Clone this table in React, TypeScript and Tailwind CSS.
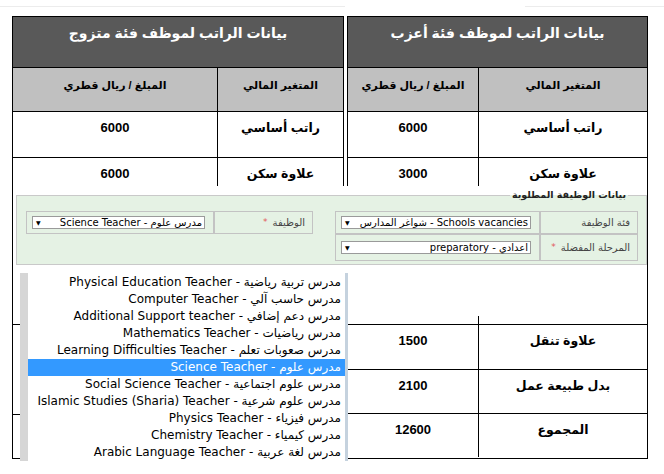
const singleRows = [
  { label: 'راتب أساسي', amount: '6000', h: 'h-[46px]' },
  { label: 'علاوة سكن', amount: '3000', h: 'h-[167px]' },
  { label: 'علاوة تنقل', amount: '1500', h: 'h-[45px]' },
  { label: 'بدل طبيعة عمل', amount: '2100', h: 'h-[44px]' },
  { label: 'المجموع', amount: '12600', h: 'h-[44px]' },
];

const marriedRows = [
  { label: 'راتب أساسي', amount: '6000', h: 'h-[46px]' },
  { label: 'علاوة سكن', amount: '6000', h: 'h-[167px]' },
  { label: '', amount: '', h: 'h-[90px]' },
  { label: '', amount: '', h: 'h-[44px]' },
];

const jobs = [
  'مدرس تربية رياضية - Physical Education Teacher',
  'مدرس حاسب آلي - Computer Teacher',
  'مدرس دعم إضافي - Additional Support teacher',
  'مدرس رياضيات - Mathematics Teacher',
  'مدرس صعوبات تعلم - Learning Difficulties Teacher',
  'مدرس علوم - Science Teacher',
  'مدرس علوم اجتماعية - Social Science Teacher',
  'مدرس علوم شرعية - Islamic Studies (Sharia) Teacher',
  'مدرس فيزياء - Physics Teacher',
  'مدرس كيمياء - Chemistry Teacher',
  'مدرس لغة عربية - Arabic Language Teacher',
];

type Row = { label: string; amount: string; h: string };

function SalaryTable({ title, rows, width, labelWidth }: { title: string; rows: Row[]; width: string; labelWidth: string }) {
  return (
    <div className={`${width} border border-black flex flex-col`}>
      <div className="h-[50px] bg-[#595959] text-white text-center font-bold text-[14px] leading-[20px] pt-[6px]">
        {title}
      </div>
      <div className="h-[44px] flex border-t border-black bg-[#c0c0c0] font-bold text-[11px] leading-[16px]">
        <div className={`${labelWidth} border-l border-black text-center pt-[9px]`}>المتغير المالي</div>
        <div className="flex-1 text-center pt-[9px]">المبلغ / ريال قطري</div>
      </div>
      {rows.map((r, i) => (
        <div key={i} className={`${r.h} flex border-t border-black font-bold leading-[16px]`}>
          <div className={`${labelWidth} border-l border-black text-center pt-[8px] text-[12.5px]`}>{r.label}</div>
          <div className="flex-1 text-center pt-[8px] text-[13px]">{r.amount}</div>
        </div>
      ))}
    </div>
  );
}

function FakeSelect({ value, width }: { value: string; width: string }) {
  return (
    <div className={`${width} h-[13px] bg-white border border-[#9a9a9a] flex items-center justify-between text-[10px] leading-[11px] text-black`}>
      <span className="pr-[2px] whitespace-nowrap">{value}</span>
      <span className="pl-[3px] text-[6px] leading-[6px]">▼</span>
    </div>
  );
}

function Label({ text, required }: { text: string; required?: boolean }) {
  return (
    <div className="flex items-center pr-[7px] text-[10px] text-[#444] border border-[#c3c3c3] h-full">
      <span>{text}</span>
      {required && <span className="text-[#e25a5a] text-[9px] mr-[5px]">*</span>}
    </div>
  );
}

export default function App() {
  return (
    <div className="relative w-[664px] h-[474px] bg-white overflow-hidden text-black" style={{ fontFamily: "'Liberation Sans', 'DejaVu Sans', sans-serif" }}>
      {/* faint rule */}
      <div className="flex pt-[6px]">
        <div className="h-px w-[345px] bg-[#ececec]" />
        <div className="h-px w-[180px]" />
        <div className="h-px flex-1 bg-[#ececec]" />
      </div>

      {/* salary tables */}
      <div dir="rtl" className="flex gap-[3px] mt-[9px] pr-[16px]">
        <SalaryTable title="بيانات الراتب لموظف فئة أعزب" rows={singleRows} width="w-[301px]" labelWidth="w-[169px]" />
        <SalaryTable title="بيانات الراتب لموظف فئة متزوج" rows={marriedRows} width="w-[332px]" labelWidth="w-[126px]" />
      </div>

      {/* job request form */}
      <div className="absolute left-[13px] top-[186px] w-[634px] h-[130px] bg-white">
        <fieldset dir="rtl" className="ml-[3px] mt-[2px] w-[631px] h-[77px] border border-[#c9c9c9] bg-[#e5f2e4] pr-[8px] pl-[9px]" style={{ fontFamily: "'DejaVu Sans', sans-serif" }}>
          <legend className="mr-[10px] px-[2px] text-[9.5px] font-bold text-[#222] leading-[14px]">بيانات الوظيفة المطلوبة</legend>
          <div className="flex justify-between mt-[9px]">
            <div className="w-[303px] flex flex-col">
              <div className="flex h-[23px]">
                <div className="w-[99px]"><Label text="فئة الوظيفة" /></div>
                <div className="flex-1 flex items-center pr-[8px] pl-[5px] border border-[#c3c3c3]">
                  <FakeSelect value="Schools vacancies - شواغر المدارس" width="w-[190px]" />
                </div>
              </div>
              <div className="flex h-[27px]">
                <div className="w-[99px]"><Label text="المرحلة المفضلة" required /></div>
                <div className="flex-1 flex items-center pr-[8px] pl-[5px] border border-[#c3c3c3]">
                  <FakeSelect value="اعدادي - preparatory" width="w-[190px]" />
                </div>
              </div>
            </div>
            <div className="w-[287px] flex h-[23px]">
              <div className="w-[100px]"><Label text="الوظيفة" required /></div>
              <div className="flex-1 flex items-center pr-[8px] pl-[5px] border border-[#c3c3c3]">
                <FakeSelect value="مدرس علوم - Science Teacher" width="w-[173px]" />
              </div>
            </div>
          </div>
        </fieldset>
      </div>

      {/* open dropdown list */}
      <div className="absolute left-[20px] top-[273px] w-[328px] h-[188px] flex">
        <div className="w-[8px] bg-[#d6d6d6]" />
        <div dir="rtl" className="flex-1 bg-white pt-[1px] text-[12px]" style={{ fontFamily: "'DejaVu Sans', sans-serif" }}>
          {jobs.map((j, i) => (
            <div
              key={i}
              className={`h-[17px] leading-[17px] pr-[4px] whitespace-nowrap ${i === 5 ? 'bg-[#3399ff] text-white' : 'text-black'}`}
            >
              {j}
            </div>
          ))}
        </div>
        <div className="w-[3px] bg-[#c5d2de]" />
      </div>
    </div>
  );
}
